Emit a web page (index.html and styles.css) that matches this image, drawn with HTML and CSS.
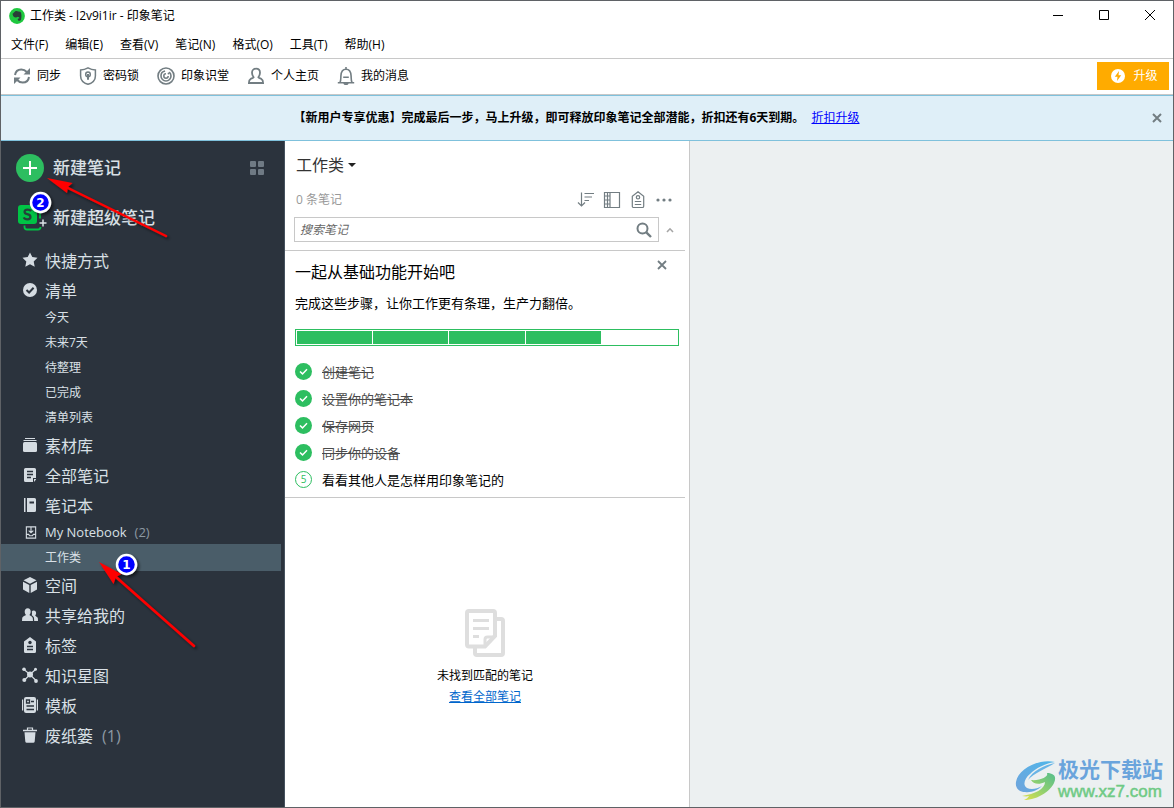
FILE: index.html
```
<!DOCTYPE html>
<html lang="zh-CN">
<head>
<meta charset="utf-8">
<meta name="viewport" content="width=device-width, initial-scale=1">
<title>工作类 - l2v9i1ir - 印象笔记</title>
<link rel="stylesheet" href="styles.css">
</head>
<body>
<div class="window">
  <header class="titlebar">
    <svg class="app-icon" viewBox="0 0 16 16"><circle cx="8" cy="8" r="7.900" fill="#1fc83f"/><path d="M3.600 5.800L6 3.400c1-.5 2.500-.4 3.200.2 1.200 0 2.300.2 2.700.8.700 1.600.7 4.800.2 6.800-.3 1.200-1.200 1.600-2.300 1.500-1.100-.1-1.400-1.700-.5-2.300l1 0v-1c-.7-.1-1.300 0-1.600-.6-.7.900-2.900.8-3.700.2-.9-.7-1.300-1.900-1.400-3.200z" fill="#2a3d38"/></svg>
    <h1 class="app-title">工作类 - l2v9i1ir - 印象笔记</h1>
    <div class="window-controls">
      <button type="button" class="win-btn" aria-label="最小化"><svg viewBox="0 0 12 12"><path d="M1 5.500h10" stroke="#000"/></svg></button>
      <button type="button" class="win-btn" aria-label="最大化"><svg viewBox="0 0 12 12"><path d="M1.500 .5h9v9h-9z" fill="none" stroke="#000"/></svg></button>
      <button type="button" class="win-btn" aria-label="关闭"><svg viewBox="0 0 12 12"><path d="M1 0l10 10M11 0L1 10" stroke="#000"/></svg></button>
    </div>
  </header>

  <nav class="menubar" aria-label="菜单">
    <button type="button">文件(F)</button>
    <button type="button">编辑(E)</button>
    <button type="button">查看(V)</button>
    <button type="button">笔记(N)</button>
    <button type="button">格式(O)</button>
    <button type="button">工具(T)</button>
    <button type="button">帮助(H)</button>
  </nav>

  <div class="toolbar">
    <button type="button" class="tool"><svg viewBox="0 0 18 18" fill="none" stroke="#727d82" stroke-width="2"><path d="M2 8C2.500 4.600 5 2.400 8.300 2.400c2.200 0 4 .9 5.500 2.600M16 10c-.5 3.400-3 5.600-6.300 5.600-2.200 0-4-.9-5.500-2.600"/><path d="M17 1v6.500h-6.500zM1 17v-6.500h6.500z" fill="#727d82" stroke="none"/></svg>同步</button>
    <button type="button" class="tool"><svg viewBox="0 0 18 18" fill="none" stroke="#727d82" stroke-width="1.500"><path d="M9 .9c2.400 1.400 4.800 2 7.400 2v6c0 4-3 7-7.400 8.400C4.600 15.900 1.600 12.900 1.600 8.900v-6c2.600 0 5-.6 7.400-2z"/><circle cx="9" cy="7.400" r="2.300"/><path d="M9 7v5.800" stroke-width="2"/></svg>密码锁</button>
    <button type="button" class="tool"><svg viewBox="0 0 18 18" fill="none" stroke="#727d82" stroke-width="1.600"><circle cx="9" cy="9" r="8"/><circle cx="9" cy="9" r="5" stroke-dasharray="27 4.400" stroke-dashoffset="5"/><path d="M9 6.800a2.200 2.200 0 1 0 2.200 2.200" stroke-width="1.500"/><circle cx="11.500" cy="6.500" r=".9" fill="#727d82" stroke="none"/></svg>印象识堂</button>
    <button type="button" class="tool"><svg viewBox="0 0 18 18" fill="none" stroke="#727d82" stroke-width="1.800"><path d="M9 1.700c2.400 0 4 1.600 4 4 0 1.900-.7 3.300-1.600 4.600.4.8 1.600 1 3 1.700 1.300.7 1.700 2 1.700 4H1.900c0-2 .4-3.300 1.700-4 1.400-.7 2.600-.9 3-1.700C5.700 9 5 7.600 5 5.700c0-2.400 1.600-4 4-4z"/></svg>个人主页</button>
    <button type="button" class="tool"><svg viewBox="0 0 18 18" fill="none" stroke="#727d82" stroke-width="1.600"><path d="M.8 15.700h16.400M3 15.500c.9-1.800.8-4 .9-6.500C4.100 5 6 2.300 9 2.300S13.900 5 14.100 9c.1 2.500 0 4.700.9 6.500M6.200 10.300h5.600M9 2.300V0M7 16c.5 1.900 3.500 1.900 4 0"/></svg>我的消息</button>
    <button type="button" class="upgrade"><svg viewBox="0 0 14 14"><circle cx="7" cy="7" r="7" fill="#fff"/><path d="M8 2L3.800 7.700h2.700L6 12l4.200-5.700H7.500z" fill="#ffab00"/></svg>升级</button>
  </div>

  <div class="banner">
    <p class="banner-text"><strong>【新用户专享优惠】完成最后一步，马上升级，即可释放印象笔记全部潜能，折扣还有6天到期。</strong> <a href="#upgrade">折扣升级</a></p>
    <button type="button" class="close" aria-label="关闭横幅"><svg viewBox="0 0 10 10"><path d="M1 1l8 8M9 1L1 9" stroke="#727d82" stroke-width="2"/></svg></button>
  </div>

  <div class="workspace">
    <nav class="sidebar" aria-label="侧边栏">
      <div class="create">
        <button type="button" class="create-btn">
          <svg class="create-icon" viewBox="0 0 28 28"><circle cx="14" cy="14" r="14" fill="#2dbe60"/><path d="M14 7v14M7 14h14" stroke="#fff" stroke-width="2"/></svg>新建笔记
        </button>
        <button type="button" class="grid-btn" aria-label="视图"><svg viewBox="0 0 14 14" fill="#6f7a84"><rect width="6" height="6" rx="1"/><rect x="8" width="6" height="6" rx="1"/><rect y="8" width="6" height="6" rx="1"/><rect x="8" y="8" width="6" height="6" rx="1"/></svg></button>
      </div>
      <div class="create create-super">
        <button type="button" class="create-btn">
          <svg class="create-icon" viewBox="0 0 28 28"><rect x="2" y="1" width="19" height="19" rx="3" fill="#00c445"/><path d="M8.500 21.500v1.500a2.500 2.500 0 0 0 2.500 2.500h11a2.500 2.500 0 0 0 2.500-2.500M24 6v8.500" fill="none" stroke="#00c445" stroke-width="1.800"/><path d="M15 7.300c-.6-1.100-1.700-1.600-3.300-1.600-4 0-4.200 3.800-.5 4.500 4.500.8 4.200 5.100.3 5.100-2 0-3.200-.7-3.700-2" fill="none" stroke="#25423a" stroke-width="2.200"/><path d="M27 15.500v7M23.500 19H30.500" stroke="#dce3e8" stroke-width="1.500"/></svg>新建超级笔记
        </button>
      </div>

      <ul class="nav">
        <li><a href="#shortcuts"><svg viewBox="0 0 16 16"><path d="M8 .5l2.300 4.600 5.200.7-3.800 3.600 1 5.300L8 12.300l-4.700 2.400 1-5.300L.5 5.800l5.200-.7z"/></svg>快捷方式</a></li>
        <li><a href="#tasks"><svg viewBox="0 0 16 16"><circle cx="8" cy="8" r="7"/><path d="M4.500 8l2.600 2.500 4.500-4.700" class="cut"/></svg>清单</a>
          <ul class="subnav tasks">
            <li><a href="#today">今天</a></li>
            <li><a href="#week">未来7天</a></li>
            <li><a href="#inbox">待整理</a></li>
            <li><a href="#done">已完成</a></li>
            <li><a href="#lists">清单列表</a></li>
          </ul>
        </li>
        <li><a href="#library"><svg viewBox="0 0 16 16"><rect x="1" y="5" width="14" height="10" rx="1.500"/><path d="M1.500 3.500h13M3 1.500h10" class="line"/></svg>素材库</a></li>
        <li><a href="#all"><svg viewBox="0 0 16 16"><path d="M3.500 1h9A1.500 1.500 0 0 1 14 2.500V11h-3v4H3.500A1.500 1.500 0 0 1 2 13.500v-11A1.500 1.500 0 0 1 3.500 1zM12 12h2v.500L12 15z"/><path d="M5 4.500h6M5 7.500h6M5 10.500h4" class="cut thin"/></svg>全部笔记</a></li>
        <li><a href="#notebooks"><svg viewBox="0 0 16 16"><path d="M2 1h1.500v14H2zM5 1h7.500A1.500 1.500 0 0 1 14 2.500v11a1.500 1.500 0 0 1-1.500 1.500H5z"/><path d="M7.500 5.500H12" class="cut"/></svg>笔记本</a>
          <ul class="subnav books">
            <li><a href="#my-notebook"><svg class="small" viewBox="0 0 12 14"><path d="M1 1h10v12H1zM1 9h2.500l1 1.500h3l1-1.500H11M6 1.500v5.500M3.500 5L6 7.300 8.500 5" class="outline"/></svg>My Notebook<span class="count">(2)</span></a></li>
            <li class="active"><a href="#work" aria-current="page">工作类</a></li>
          </ul>
        </li>
        <li><a href="#spaces"><svg viewBox="0 0 16 16"><path d="M8 0l6.500 3.300L8 6.700 1.500 3.300zM1 4.700l6.300 3.200V16L1 12.500zM15 4.700L8.700 7.900V16l6.300-3.500z"/></svg>空间</a></li>
        <li><a href="#shared"><svg viewBox="0 0 16 16"><path d="M5.700 1.200c2 0 3 1.300 3 3.200 0 1.500-.6 2.600-1.200 3.300.2 1.200 3 1.200 3.300 3.500l.2 2.800H0l.2-2.800c.3-2.300 3.300-2.300 3.700-3.500-.7-.7-1.200-1.800-1.200-3.300 0-1.900 1-3.200 3-3.200z"/><path d="M11.600 3.500c1.600 0 2.500 1 2.500 2.500 0 1.200-.4 2-.9 2.600.1 1 2.500 1.100 2.700 2.800L16 14h-3.800l-.2-3c-.2-1.400-1.200-2.100-2.300-2.800.4-1.100.4-1.900.1-3.800.4-.6 1-.9 1.800-.9z"/></svg>共享给我的</a></li>
        <li><a href="#tags"><svg viewBox="0 0 16 16"><path d="M8 0l6 4.500v10a1.500 1.500 0 0 1-1.500 1.500h-9A1.500 1.500 0 0 1 2 14.500v-10z"/><circle cx="8" cy="5.500" r="1.700" fill="#2b333d"/><path d="M5 9.500h6M5 12.500h6" class="cut thin"/></svg>标签</a></li>
        <li><a href="#graph"><svg viewBox="0 0 16 16"><circle cx="8" cy="7.500" r="3"/><path d="M2 2.500l6 5 5.500-5M2.500 13L8 7.500l6 6" class="line"/><circle cx="2" cy="2.300" r="1.800"/><circle cx="13.500" cy="2.300" r="1.500"/><circle cx="2.300" cy="13" r="2"/><circle cx="14" cy="14" r="1.900"/></svg>知识星图</a></li>
        <li><a href="#templates"><svg viewBox="0 0 16 16"><rect x="2" y="0" width="12" height="16" rx="2"/><path d="M.6 2.500v11M15.400 2.500v11" class="line"/><path d="M4.500 3h3v3h-3zM9 4.500h3M4.500 9h7.500M4.500 12.500h7.500" class="cut thin"/></svg>模板</a></li>
        <li><a href="#trash"><svg viewBox="0 0 16 16"><path d="M5.500 3V1h5v2" class="line"/><path d="M1 2.800h14v1.500H1zM2.500 5.300h11l-.8 9.200a1.500 1.500 0 0 1-1.500 1.300H4.800a1.500 1.500 0 0 1-1.500-1.300z"/></svg>废纸篓<span class="count">(1)</span></a></li>
      </ul>
    </nav>

    <section class="notes">
      <div class="notes-head">
        <button type="button" class="book-name">工作类<span class="caret"></span></button>
        <div class="notes-tools">
          <span class="notes-count">0 条笔记</span>
          <button type="button" class="icon-btn" aria-label="排序"><svg viewBox="0 0 18 18"><path d="M4.500 1.500V15M1 11.500L4.500 15 8 11.500M7.500 2.500H17M7.500 6H15M7.500 9.500H12"/></svg></button>
          <button type="button" class="icon-btn" aria-label="视图"><svg viewBox="0 0 18 18"><path d="M1.500 1.500h15v15h-15zM7 1.500v15M4.500 1.500v15M1.500 5h5.500M1.500 9h5.500M1.500 13h5.500"/></svg></button>
          <button type="button" class="icon-btn" aria-label="标签"><svg viewBox="0 0 18 18"><path d="M9 .8l5.700 4.400v10a1.300 1.300 0 0 1-1.300 1.300H4.600a1.300 1.300 0 0 1-1.300-1.300v-10zM5.800 10.500h6.400M5.800 13.500h6.400"/><circle cx="9" cy="6.300" r="1.700"/></svg></button>
          <button type="button" class="icon-btn" aria-label="更多"><svg viewBox="0 0 18 18"><g fill="#727d82" stroke="none"><circle cx="3" cy="9" r="1.600"/><circle cx="9" cy="9" r="1.600"/><circle cx="15" cy="9" r="1.600"/></g></svg></button>
        </div>
        <form class="search">
          <div class="search-box">
            <input type="search" aria-label="搜索笔记" placeholder="搜索笔记">
            <button type="button" aria-label="搜索"><svg viewBox="0 0 16 16" fill="none" stroke="#727d82"><circle cx="6.500" cy="6.500" r="5" stroke-width="2"/><path d="M10.300 10.300l4.700 4.700" stroke-width="2.400"/></svg></button>
          </div>
          <button type="button" class="collapse" aria-label="收起"><svg viewBox="0 0 8 6"><path d="M1 5l3-3.200L7 5" fill="none" stroke="#a6a6a6" stroke-width="1.600"/></svg></button>
        </form>
      </div>

      <div class="guide">
        <button type="button" class="close guide-close" aria-label="关闭指南"><svg viewBox="0 0 10 10"><path d="M1 1l8 8M9 1L1 9" stroke="#727d82" stroke-width="1.800"/></svg></button>
        <h2>一起从基础功能开始吧</h2>
        <p>完成这些步骤，让你工作更有条理，生产力翻倍。</p>
        <div class="progress" role="progressbar" aria-label="完成进度" aria-valuenow="4" aria-valuemin="0" aria-valuemax="5"><i></i><i></i><i></i><i></i></div>
        <ol class="steps">
          <li class="done"><svg viewBox="0 0 17 17"><circle cx="8.500" cy="8.500" r="8.500"/><path d="M5 8.500l2.500 2.400L12 6.300"/></svg><s>创建笔记</s></li>
          <li class="done"><svg viewBox="0 0 17 17"><circle cx="8.500" cy="8.500" r="8.500"/><path d="M5 8.500l2.500 2.400L12 6.300"/></svg><s>设置你的笔记本</s></li>
          <li class="done"><svg viewBox="0 0 17 17"><circle cx="8.500" cy="8.500" r="8.500"/><path d="M5 8.500l2.500 2.400L12 6.300"/></svg><s>保存网页</s></li>
          <li class="done"><svg viewBox="0 0 17 17"><circle cx="8.500" cy="8.500" r="8.500"/><path d="M5 8.500l2.500 2.400L12 6.300"/></svg><s>同步你的设备</s></li>
          <li><span class="step-no">5</span>看看其他人是怎样用印象笔记的</li>
        </ol>
      </div>

      <div class="empty">
        <svg viewBox="0 0 40 48" fill="none" stroke="#dedede" stroke-width="4"><path d="M31 10h5a2 2 0 0 1 2 2v32a2 2 0 0 1-2 2H12a2 2 0 0 1-2-2v-6"/><path d="M4 2h24a2 2 0 0 1 2 2v23L20 37.500H4a2 2 0 0 1-2-2V4a2 2 0 0 1 2-2z"/><path d="M20 37v-6.500a2.500 2.500 0 0 1 2.500-2.500H30" stroke-width="3"/><path d="M8 11.500h16M8 19.500h16M8 27.500h6" stroke-width="3"/></svg>
        <p>未找到匹配的笔记</p>
        <a href="#all">查看全部笔记</a>
      </div>
    </section>

    <main class="editor">
      <div class="brand">
        <svg viewBox="0 0 42 42"><defs><linearGradient id="blue" x1="0" y1="1" x2="1" y2="0"><stop offset="0" stop-color="#6fa4dc"/><stop offset="1" stop-color="#4fb6ea"/></linearGradient><linearGradient id="green" x1="0" y1="1" x2="1" y2="0"><stop offset="0" stop-color="#e2e04a"/><stop offset=".5" stop-color="#8fd070"/><stop offset="1" stop-color="#55bd8c"/></linearGradient></defs><path d="M40 3C24-1 3 10 1 23c-1 6 3 10 9 10 6 1 13-2 17-6-5 3-11 4-15 2-5-3-2-10 3-14C21 9 31 4 40 3z" fill="url(#blue)"/><path d="M40 4C29 6 17 12 13 21c6-7 17-11 27-17z" fill="#69b4e6"/><path d="M16 21c2 4 8 5 14 2 0 7-10 12-23 14 2 0 4 1 7 0-1 2-3 3-5 4 14 0 29-10 31-20 1-5-3-7-8-7 2 4-8 8-16 7z" fill="url(#green)"/></svg>
        <div><span class="brand-name">极光下载站</span><span class="brand-url">www.xz7.com</span></div>
      </div>
    </main>
  </div>

  <svg class="marks" width="220" height="680" viewBox="0 0 220 680" aria-hidden="true">
    <defs><filter id="shade" x="-20%" y="-20%" width="150%" height="150%"><feDropShadow dx="2" dy="2" stdDeviation="1.500" flood-opacity=".55"/></filter></defs>
    <g filter="url(#shade)">
      <path d="M68 188L166 236" stroke="#f00" stroke-width="2.500" stroke-linecap="round"/><path d="M47 178l25.500 5-4.500 4-1 6z" fill="#f00"/>
      <path d="M116 577L194 646" stroke="#f00" stroke-width="2.500" stroke-linecap="round"/><path d="M99 562l22.500 12-5.500 3-2.500 7z" fill="#f00"/>
      <circle cx="40.500" cy="202.500" r="9.500" fill="#00f" stroke="#fff" stroke-width="2.500"/>
      <circle cx="126.500" cy="564.500" r="9.500" fill="#00f" stroke="#fff" stroke-width="2.500"/>
    </g>
    <g class="mark-text"><text x="40.500" y="207">2</text><text x="126.500" y="569">1</text></g>
  </svg>
</div>
</body>
</html>
```

FILE: styles.css
```
* { box-sizing: border-box; }

body {
  margin: 0;
  font: 12px/18px "Open Sans", "Noto Sans CJK SC", sans-serif;
  color: #000;
}

h1, h2, p, ul, ol { margin: 0; padding: 0; font-weight: 400; }
ul, ol { list-style: none; }
svg { display: block; flex: none; }
a { color: inherit; text-decoration: none; }

button {
  margin: 0;
  padding: 0;
  border: 0;
  background: none;
  color: inherit;
  font: inherit;
  white-space: nowrap;
}

.window {
  position: relative;
  display: flex;
  flex-direction: column;
  min-height: 100vh;
  border: 1px solid #5f6266;
  background: #fff;
}

.titlebar { display: flex; align-items: center; height: 30px; padding-left: 8px; }
.app-icon { width: 16px; height: 16px; margin-right: 5px; }
.app-title { font-size: 12px; line-height: 18px; }
.window-controls { display: flex; margin-left: auto; }
.win-btn { display: grid; place-items: center; width: 46px; height: 30px; }
.win-btn svg { width: 12px; height: 12px; }

.menubar {
  display: flex;
  gap: 17px;
  height: 28px;
  padding-left: 10px;
  border-bottom: 1px solid #c8c8c8;
}

.toolbar {
  display: flex;
  align-items: center;
  gap: 18px;
  height: 36px;
  padding: 0 4px 2px 12px;
  border-bottom: 1px solid #c8c8c8;
}
.tool { display: flex; align-items: center; gap: 6px; }
.tool svg { width: 18px; height: 18px; }
.upgrade {
  display: flex;
  align-items: center;
  justify-content: center;
  gap: 8px;
  width: 72px;
  height: 28px;
  padding-left: 3px;
  margin-left: auto;
  background: #ffab00;
  color: #fff;
}
.upgrade svg { width: 14px; height: 14px; }

.banner {
  display: flex;
  align-items: center;
  height: 46px;
  padding-right: 11px;
  border: solid #7fc1dc;
  border-width: 1px 0;
  background: #dfeff8;
}
.banner-text { flex: 1; text-align: center; }
.banner-text a { margin-left: 4px; color: #00f; text-decoration: underline; }
.close svg { width: 10px; height: 10px; }

.workspace { display: flex; flex: 1; }

.sidebar {
  flex: 0 0 284px;
  padding-top: 3px;
  border-right: 1px solid #46525e;
  background: #2b333d;
  color: #d9e0e6;
}
.create {
  display: flex;
  align-items: center;
  justify-content: space-between;
  height: 48px;
  padding: 0 20px 0 15px;
}
.create-super { height: 52px; margin-bottom: 2px; }
.create-btn { display: flex; align-items: center; gap: 9px; font-size: 17px; font-weight: 500; line-height: 26px; }
.create-icon { width: 28px; height: 28px; overflow: visible; }
.grid-btn svg { width: 14px; height: 14px; }

.nav > li > a {
  display: flex;
  align-items: center;
  gap: 7px;
  height: 30px;
  padding-left: 21px;
  font-size: 16px;
  line-height: 24px;
}
.nav svg { width: 16px; height: 16px; margin-bottom: 2px; fill: #d5dce2; }
.nav .cut { fill: none; stroke: #2b333d; stroke-width: 2; }
.nav .thin { stroke-width: 1.3; }
.nav .line { fill: none; stroke: #d5dce2; stroke-width: 1.2; }
.nav .outline { fill: none; stroke: #d5dce2; stroke-width: 1.2; }
.subnav a { display: flex; align-items: center; height: 25px; padding: 0 0 2px 44px; }
.books li:first-child a { gap: 8px; height: 23px; padding: 0 0 1px 24px; font-size: 13px; }
.nav .small { width: 12px; height: 13px; margin-bottom: 0; }
.books .active { margin-right: 3px; background: #4a5d69; }
.books .active a { height: 27px; padding-bottom: 0; }
.count { color: #8d99a3; }
.nav > li > a .count { margin-left: 2px; }

.notes {
  display: flex;
  flex-direction: column;
  flex: 0 0 405px;
  border-right: 1px solid #c8c8c8;
  background: #fff;
}
.notes-head { margin-right: 4px; padding: 12px 0 8px 9px; border-bottom: 1px solid #c8c8c8; }
.book-name {
  display: flex;
  align-items: center;
  gap: 4px;
  padding-left: 2px;
  font-size: 16px;
  line-height: 24px;
  color: #333;
}
.caret { border: 4px solid transparent; border-top-color: #222; border-bottom: 0; }
.notes-tools { display: flex; align-items: center; gap: 8px; height: 40px; padding: 6px 12px 0 2px; }
.notes-count { margin-right: auto; color: #999; }
.icon-btn svg { width: 18px; height: 18px; fill: none; stroke: #727d82; stroke-width: 1.2; }
.search { display: flex; align-items: center; }
.search-box {
  display: flex;
  align-items: center;
  flex: 1;
  height: 25px;
  padding: 0 6px 0 5px;
  border: 1px solid #c8c8c8;
}
.search-box input {
  flex: 1;
  min-width: 0;
  padding: 0;
  border: 0;
  outline: 0;
  background: none;
  font: inherit;
  font-style: italic;
}
.search-box input::placeholder { color: #666; }
.search-box svg { width: 16px; height: 16px; }
.collapse { display: grid; place-items: center; width: 26px; padding-right: 4px; }
.collapse svg { width: 8px; height: 6px; }

.guide {
  position: relative;
  margin-right: 4px;
  padding: 9px 6px 4px 10px;
  border-bottom: 1px solid #c8c8c8;
}
.guide-close { position: absolute; top: 9px; right: 18px; }
.guide h2 { font-size: 16px; line-height: 24px; }
.guide p { margin-top: 9px; font-size: 13px; line-height: 20px; }
.progress {
  display: grid;
  grid-template-columns: repeat(5, 1fr);
  gap: 1px;
  height: 17px;
  margin: 16px 0 12px;
  padding: 1px;
  border: 1px solid #2dbe60;
}
.progress i { background: #2dbe60; }
.steps { font-size: 13px; }
.steps li { display: flex; align-items: center; gap: 10px; height: 27px; }
.steps svg { width: 17px; height: 17px; fill: #2dbe60; }
.steps path { fill: none; stroke: #fff; stroke-width: 1.5; }
.done { color: #4a4a4a; }
.step-no {
  width: 17px;
  height: 17px;
  border: 1px solid #2dbe60;
  border-radius: 50%;
  color: #2dbe60;
  font-size: 10px;
  line-height: 15px;
  text-align: center;
}

.empty {
  display: flex;
  flex-direction: column;
  align-items: center;
  gap: 3px;
  padding: 111px 4px 20px 0;
}
.empty svg { width: 40px; height: 48px; margin-bottom: 7px; }
.empty a { color: #06c; text-decoration: underline; }

.editor {
  display: flex;
  flex: 1;
  align-items: flex-end;
  justify-content: flex-end;
  padding: 0 10px 5px 0;
  background: #ecf0f1;
}
.brand { display: flex; align-items: center; gap: 1px; }
.brand svg { width: 42px; height: 42px; }
.brand-name, .brand-url { display: block; }
.brand-name { color: #6aa4dc; font-size: 21px; font-weight: 700; line-height: 25px; }
.brand-url { color: #6fca85; font: 17px/20px "Liberation Sans", Arial, sans-serif; -webkit-text-stroke: 0.5px #6fca85; }

.marks { position: absolute; top: -1px; left: -1px; pointer-events: none; }
.mark-text { fill: #fff; font: 700 12px "DejaVu Sans", sans-serif; text-anchor: middle; }
```
